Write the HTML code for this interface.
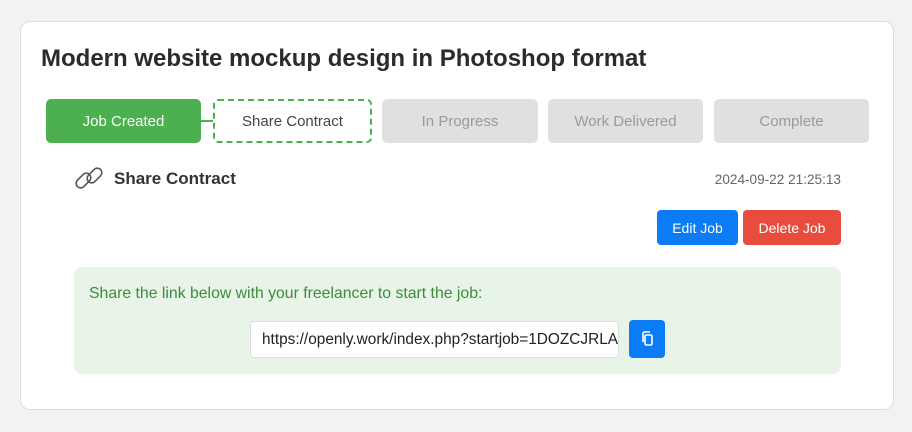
<!DOCTYPE html><html><head><style>
body{margin:0;background:#f2f2f2;width:912px;height:432px;overflow:hidden;font-family:"Liberation Sans",sans-serif;}
.card{position:absolute;left:20px;top:21px;width:874px;height:389px;background:#fff;border:1px solid #ddd;border-radius:10px;box-sizing:border-box}
.a{position:absolute}
h1{position:absolute;left:41px;top:45px;margin:0;font-size:24px;font-weight:bold;color:#2b2b2b}
.st{position:absolute;top:99px;height:44px;border-radius:5px;display:flex;align-items:center;justify-content:center;font-size:15px;box-sizing:border-box;background:#e0e0e0;color:#9a9a9a}
.btn{position:absolute;top:210px;height:35px;border-radius:4px;color:#fff;font-size:14px;display:flex;align-items:center;justify-content:center}
</style></head><body>
<div class="card"></div>
<h1>Modern website mockup design in Photoshop format</h1>
<div class="st" style="left:46px;width:155px;background:#4caf50;color:#fff">Job Created</div>
<div class="a" style="left:201px;top:120px;width:12px;height:2px;background:#4caf50"></div>
<div class="st" style="left:213px;width:159px;background:#fff;border:2px dashed #4caf50;color:#444">Share Contract</div>
<div class="st" style="left:382px;width:156px">In Progress</div>
<div class="st" style="left:548px;width:155px">Work Delivered</div>
<div class="st" style="left:714px;width:155px">Complete</div>
<svg class="a" style="left:74px;top:166px" width="30" height="24" viewBox="0 0 30 24" fill="none" stroke="#555" stroke-width="1.6"><rect x="1" y="10" width="17" height="9" rx="4.5" transform="rotate(-45 9.5 14.5)"/><rect x="12" y="5" width="17" height="9" rx="4.5" transform="rotate(-45 20.5 9.5)"/></svg>
<div class="a" style="left:114px;top:169px;font-size:17px;font-weight:bold;color:#333">Share Contract</div>
<div class="a" style="right:71px;top:172px;font-size:13.6px;color:#666">2024-09-22 21:25:13</div>
<div class="btn" style="left:657px;width:81px;background:#0b7cf5">Edit Job</div>
<div class="btn" style="left:743px;width:98px;background:#e74c3c">Delete Job</div>
<div class="a" style="left:74px;top:267px;width:767px;height:107px;background:#e7f4e7;border-radius:8px"></div>
<div class="a" style="left:89px;top:285px;font-size:15.8px;color:#3d8b3d">Share the link below with your freelancer to start the job:</div>
<div class="a" style="left:250px;top:321px;width:369px;height:37px;background:#fff;border:1px solid #ddd;border-radius:4px;box-sizing:border-box;overflow:hidden;white-space:nowrap;font-size:15.4px;color:#222;padding:9px 11px">https://openly.work/index.php?startjob=1DOZCJRLABCDEF</div>
<div class="a" style="left:629px;top:320px;width:36px;height:38px;background:#0b7cf5;border-radius:4px"></div>
<svg class="a" style="left:640px;top:331px" width="14" height="16" viewBox="0 0 14 16" fill="none" stroke="#fff" stroke-width="1.6"><path d="M3 11V2.5A1.5 1.5 0 0 1 4.5 1H10"/><rect x="5" y="4" width="7" height="10" rx="1.3"/></svg>
</body></html>
